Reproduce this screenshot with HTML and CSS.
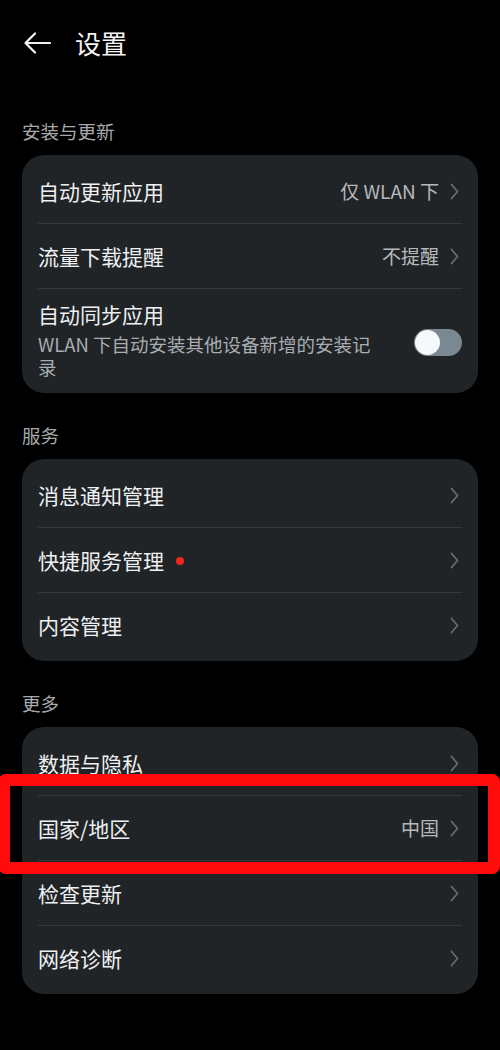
FILE: index.html
```html
<!DOCTYPE html>
<html lang="zh-CN">
<head>
<meta charset="utf-8">
<title>设置</title>
<link rel="stylesheet" href="styles.css">
</head>
<body>
<div class="page">
  <header class="header">
    <svg class="back" width="28" height="22" viewBox="0 0 28 22" aria-hidden="true">
      <path d="M27 11 H3 M12 1.5 L2.5 11 L12 20.5" fill="none" stroke="#f2f2f2" stroke-width="2.2" stroke-linecap="round" stroke-linejoin="round"/>
    </svg>
    <h1 class="title">设置</h1>
  </header>

  <section class="section first">
    <div class="section-label">安装与更新</div>
    <div class="card">
      <div class="row">
        <span class="row-title">自动更新应用</span>
        <span class="row-value">仅 WLAN 下</span>
        <svg class="chev" width="9" height="17" viewBox="0 0 9 17"><path d="M1.5 1.5 L7.5 8.5 L1.5 15.5" fill="none" stroke="#666b6f" stroke-width="1.8" stroke-linecap="round" stroke-linejoin="round"/></svg>
      </div>
      <div class="row">
        <span class="row-title">流量下载提醒</span>
        <span class="row-value">不提醒</span>
        <svg class="chev" width="9" height="17" viewBox="0 0 9 17"><path d="M1.5 1.5 L7.5 8.5 L1.5 15.5" fill="none" stroke="#666b6f" stroke-width="1.8" stroke-linecap="round" stroke-linejoin="round"/></svg>
      </div>
      <div class="row tall">
        <div class="row-text">
          <div class="row-title">自动同步应用</div>
          <div class="row-sub">WLAN 下自动安装其他设备新增的安装记录</div>
        </div>
        <div class="toggle"><span class="knob"></span></div>
      </div>
    </div>
  </section>

  <section class="section">
    <div class="section-label">服务</div>
    <div class="card">
      <div class="row">
        <span class="row-title">消息通知管理</span>
        <span class="spacer"></span>
        <svg class="chev" width="9" height="17" viewBox="0 0 9 17"><path d="M1.5 1.5 L7.5 8.5 L1.5 15.5" fill="none" stroke="#666b6f" stroke-width="1.8" stroke-linecap="round" stroke-linejoin="round"/></svg>
      </div>
      <div class="row">
        <span class="row-title">快捷服务管理</span>
        <span class="dot"></span>
        <span class="spacer"></span>
        <svg class="chev" width="9" height="17" viewBox="0 0 9 17"><path d="M1.5 1.5 L7.5 8.5 L1.5 15.5" fill="none" stroke="#666b6f" stroke-width="1.8" stroke-linecap="round" stroke-linejoin="round"/></svg>
      </div>
      <div class="row">
        <span class="row-title">内容管理</span>
        <span class="spacer"></span>
        <svg class="chev" width="9" height="17" viewBox="0 0 9 17"><path d="M1.5 1.5 L7.5 8.5 L1.5 15.5" fill="none" stroke="#666b6f" stroke-width="1.8" stroke-linecap="round" stroke-linejoin="round"/></svg>
      </div>
    </div>
  </section>

  <section class="section">
    <div class="section-label">更多</div>
    <div class="card">
      <div class="row">
        <span class="row-title">数据与隐私</span>
        <span class="spacer"></span>
        <svg class="chev" width="9" height="17" viewBox="0 0 9 17"><path d="M1.5 1.5 L7.5 8.5 L1.5 15.5" fill="none" stroke="#666b6f" stroke-width="1.8" stroke-linecap="round" stroke-linejoin="round"/></svg>
      </div>
      <div class="row">
        <span class="row-title">国家/地区</span>
        <span class="row-value">中国</span>
        <svg class="chev" width="9" height="17" viewBox="0 0 9 17"><path d="M1.5 1.5 L7.5 8.5 L1.5 15.5" fill="none" stroke="#666b6f" stroke-width="1.8" stroke-linecap="round" stroke-linejoin="round"/></svg>
      </div>
      <div class="row">
        <span class="row-title">检查更新</span>
        <span class="spacer"></span>
        <svg class="chev" width="9" height="17" viewBox="0 0 9 17"><path d="M1.5 1.5 L7.5 8.5 L1.5 15.5" fill="none" stroke="#666b6f" stroke-width="1.8" stroke-linecap="round" stroke-linejoin="round"/></svg>
      </div>
      <div class="row">
        <span class="row-title">网络诊断</span>
        <span class="spacer"></span>
        <svg class="chev" width="9" height="17" viewBox="0 0 9 17"><path d="M1.5 1.5 L7.5 8.5 L1.5 15.5" fill="none" stroke="#666b6f" stroke-width="1.8" stroke-linecap="round" stroke-linejoin="round"/></svg>
      </div>
    </div>
  </section>

  <div class="highlight" aria-hidden="true"></div>
</div>
</body>
</html>
```

FILE: styles.css
```css
* { box-sizing: border-box; }

html, body {
  margin: 0;
  padding: 0;
  background: #000;
}

body {
  font-family: "Noto Sans CJK SC", "Noto Sans", sans-serif;
  color: #eceef0;
  overflow: hidden;
}

.page {
  position: relative;
  width: 500px;
  height: 1050px;
  overflow: hidden;
}

.header {
  height: 86px;
  display: flex;
  align-items: center;
  padding-left: 23px;
}

.back {
  display: block;
}

.title {
  margin: 0 0 0 24px;
  font-size: 26px;
  font-weight: 400;
  line-height: 34px;
  color: #f4f4f4;
}

.section {
  padding: 0 22px;
}

.section.first .section-label {
  margin-top: 33px;
}

.section-label {
  margin-top: 30px;
  margin-bottom: 12px;
  font-size: 18.5px;
  line-height: 24px;
  color: #a7a9ab;
}

.card {
  background: #202427;
  border-radius: 22px;
  padding: 4px 16px;
}

.row {
  display: flex;
  align-items: center;
  height: 65px;
  border-top: 1px solid #33383b;
}

.row:first-child {
  height: 64px;
  border-top: none;
}

.row.tall {
  height: auto;
  padding: 11px 0 10px;
}

.row-title {
  font-size: 21px;
  line-height: 28px;
  color: #eef0f2;
  white-space: nowrap;
}

.row-text {
  flex: 1;
  min-width: 0;
  padding-right: 26px;
}

.row-sub {
  font-size: 18.5px;
  line-height: 23px;
  color: #a9adb1;
  margin-top: 5px;
}

.row-value {
  margin-left: auto;
  font-size: 19px;
  line-height: 24px;
  color: #b5b9bc;
  white-space: nowrap;
}

.spacer {
  flex: 1;
}

.chev {
  display: block;
  margin-left: 11px;
  margin-right: 3px;
  flex: none;
}

.dot {
  width: 8px;
  height: 8px;
  border-radius: 50%;
  background: #f0261c;
  margin-left: 12px;
  margin-top: 1px;
}

.toggle {
  flex: none;
  position: relative;
  width: 48px;
  height: 27px;
  border-radius: 14px;
  background: #7a8891;
  margin-top: 6px;
}

.knob {
  position: absolute;
  left: 1px;
  top: 1px;
  width: 25px;
  height: 25px;
  border-radius: 50%;
  background: #f6f9fb;
}

.highlight {
  position: absolute;
  left: -2px;
  top: 774px;
  width: 502px;
  height: 100px;
  border: 12px solid #ff0b0b;
  border-radius: 8px;
  pointer-events: none;
}
```
